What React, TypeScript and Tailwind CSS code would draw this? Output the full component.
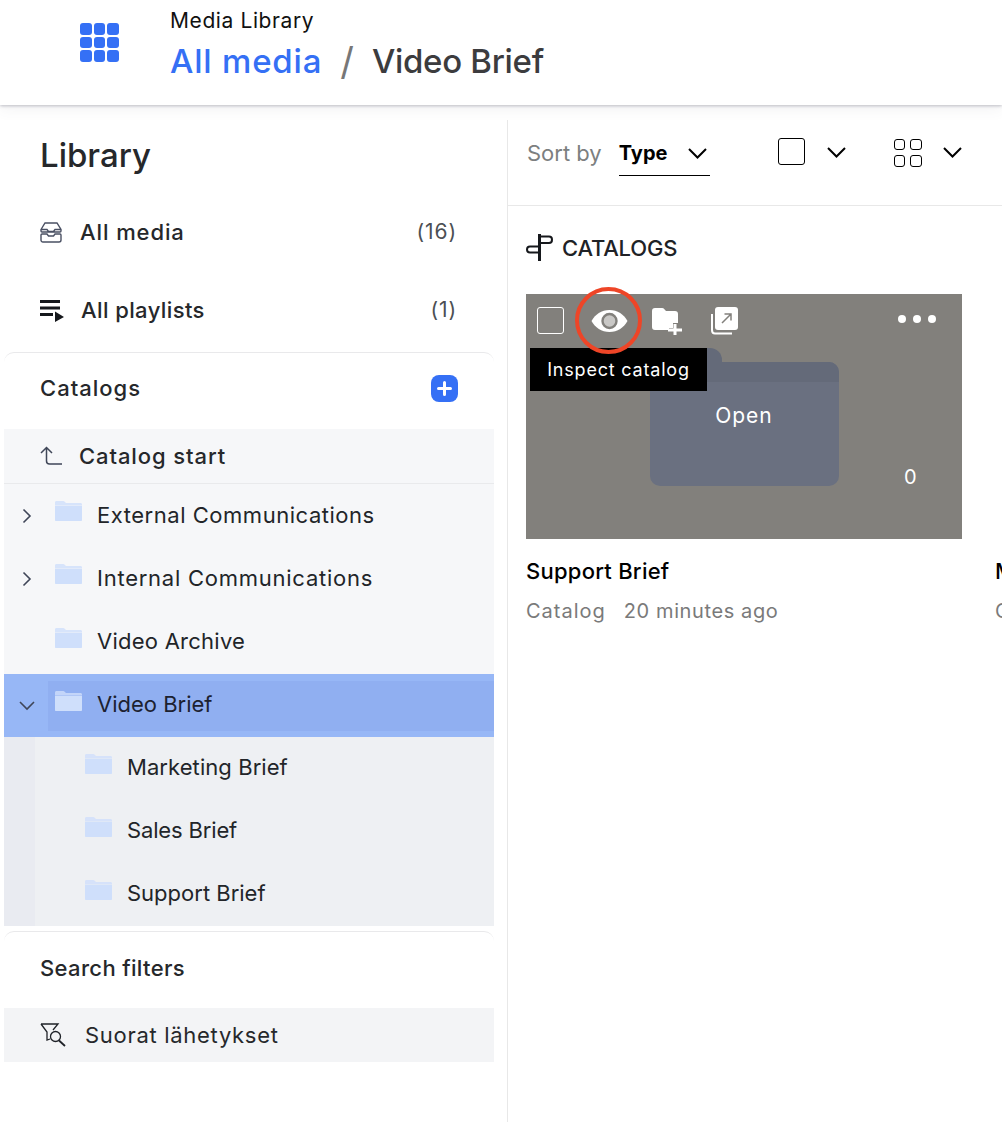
const font = "font-['Inter','Noto_Sans',sans-serif]";

function AppGrid() {
  return (
    <div className="grid w-[39px] grid-cols-3 gap-[2px]">
      {Array.from({ length: 9 }).map((_, i) => (
        <div key={i} className="h-[11.7px] rounded-[3px] bg-[#3570f5]" />
      ))}
    </div>
  );
}

function Chevron({ className = "" }: { className?: string }) {
  return (
    <svg width="19" height="11" viewBox="0 0 19 11" fill="none" stroke="#000" strokeWidth="2" className={className}>
      <path d="M1 1l8.500 8.500L18 1" />
    </svg>
  );
}

function FolderIcon({ className = "fill-[#cfdffb]" }: { className?: string }) {
  return (
    <svg width="28" height="20" viewBox="0 0 28 20" className={className}>
      <path d="M1 1.500C1 .7 1.600 0 2.400 0h6.800c.7 0 1.300.3 1.700.9L12 2h14.500c.8 0 1.500.6 1.500 1.400v.6H1z" opacity=".8" />
      <path d="M1 4.600h27V19c0 .6-.5 1-1 1H2c-.6 0-1-.4-1-1z" />
    </svg>
  );
}

type TreeRowProps = {
  label: string;
  tracking: string;
  open?: boolean;
  closed?: boolean;
  indent?: boolean;
  tall?: boolean;
  lift?: boolean;
};

function TreeRow({ label, tracking, open, closed, indent, tall, lift }: TreeRowProps) {
  return (
    <div className={`flex items-center ${tall ? "h-[64px]" : "h-[63px]"} ${open ? "bg-[#97b7f6]" : indent ? "bg-[#eef0f3]" : ""}`}>
      {indent ? (
        <div className="h-full w-[31px] shrink-0 bg-[#e9ebf1]" />
      ) : (
        <div className="flex w-[44px] shrink-0 justify-center pl-[2px]">
          {closed && (
            <svg width="10" height="16" viewBox="0 0 10 16" fill="none" stroke="#3f4658" strokeWidth="1.600">
              <path d="M1.500 1.500 8 8l-6.500 6.500" />
            </svg>
          )}
          {open && (
            <svg width="16" height="10" viewBox="0 0 16 10" fill="none" stroke="#3f4658" strokeWidth="1.600">
              <path d="M1 1l7 7 7-7" />
            </svg>
          )}
        </div>
      )}
      <div className={`flex h-[50px] flex-1 items-center ${open ? "bg-[#90aff1]" : ""} ${indent ? "pl-[49px]" : "pl-[6px]"}`}>
        <div className="-mt-[9px]">
          <FolderIcon />
        </div>
        <span className={`ml-[15px] text-[22px] ${tracking} ${lift ? "pb-[2px]" : ""} ${open ? "text-[#1c2130]" : "text-[#222529]"}`}>{label}</span>
      </div>
    </div>
  );
}

function Sidebar() {
  return (
    <aside className="flex h-full w-[508px] shrink-0 flex-col border-r border-[#e8e8e8] pl-[4px] pr-[13px]">
      <h1 className="mt-[14px] pl-[36px] text-[33px] leading-[42px] font-medium text-[#26282b]">Library</h1>
      <div className="mt-[36px] flex h-[40px] items-center pl-[36px] pr-[37px]">
        <svg width="22" height="22" viewBox="0 0 22 22" fill="none" stroke="#4a5063" strokeWidth="1.400">
          <path d="M1 8.500 5 2h12l4 6.500v1.600c0 .5-.4.9-1 .9H2c-.6 0-1-.4-1-.9zM1 8.500h6l1.500 2h5l1.500-2h6" />
          <path d="M2 13h5l1.500 2h5l1.500-2H20c.6 0 1 .4 1 1v5c0 1-.6 2-2 2H3c-1.400 0-2-1-2-2v-5c0-.6.4-1 1-1z" />
        </svg>
        <span className="ml-[18px] text-[22px] font-medium tracking-[0.9px] text-[#26282b]">All media</span>
        <span className="ml-auto text-[21px] tracking-[0.9px] text-[#4c4f54]">(16)</span>
      </div>
      <div className="mt-[38px] flex h-[40px] items-center pl-[36px] pr-[37px]">
        <svg width="26" height="24" viewBox="0 0 26 24" fill="#16181c">
          <path d="M0 2h20v3H0zM0 8.500h20v3H0zM0 15h13v3H0zM15 13.500l9 5.500-9 5z" />
        </svg>
        <span className="ml-[15px] text-[22px] font-medium tracking-[0.4px] text-[#26282b]">All playlists</span>
        <span className="ml-auto text-[21px] tracking-[0.9px] text-[#4c4f54]">(1)</span>
      </div>
      <section className="mt-[22px] rounded-t-[10px] border-t border-[#e9e9eb]">
        <div className="flex h-[76px] items-center justify-between pr-[36px] pb-[5px] pl-[36px]">
          <span className="text-[22px] font-medium tracking-[1px] text-[#26282b]">Catalogs</span>
          <div className="flex size-[27px] items-center justify-center rounded-[8px] bg-[#3570f5]">
            <svg width="15" height="15" viewBox="0 0 15 15" fill="#fff">
              <path d="M6 1.500a1.500 1.500 0 0 1 3 0V6h4.500a1.500 1.500 0 0 1 0 3H9v4.500a1.500 1.500 0 0 1-3 0V9H1.500a1.500 1.500 0 0 1 0-3H6z" />
            </svg>
          </div>
        </div>
        <div className="bg-[#f6f7f9]">
          <div className="flex h-[55px] items-center border-b border-[#e9eaec] pl-[36px]">
            <svg width="22" height="20" viewBox="0 0 22 20" fill="none" stroke="#3f4658" strokeWidth="1.500">
              <path d="M1 7 6.500 1.500 12 7M6.500 2v13c0 2 1 3 3 3H22" />
            </svg>
            <span className="ml-[17px] text-[22px] font-medium tracking-[0.9px] text-[#26282b]">Catalog start</span>
          </div>
          <TreeRow label="External Communications" tracking="tracking-[0.53px]" closed />
          <TreeRow label="Internal Communications" tracking="tracking-[0.75px]" closed />
          <TreeRow label="Video Archive" tracking="tracking-[0.25px]" tall lift />
          <TreeRow label="Video Brief" tracking="tracking-[0px]" open lift />
          <TreeRow label="Marketing Brief" tracking="tracking-[0.07px]" indent lift />
          <TreeRow label="Sales Brief" tracking="tracking-[-0.15px]" indent lift />
          <TreeRow label="Support Brief" tracking="tracking-[0px]" indent lift />
        </div>
      </section>
      <section className="mt-[5px] rounded-t-[10px] border-t border-[#e9e9eb]">
        <div className="flex h-[76px] items-center pb-[4px] pl-[36px]">
          <span className="text-[22px] font-medium tracking-[0.35px] text-[#26282b]">Search filters</span>
        </div>
        <div className="flex h-[54px] items-center bg-[#f3f4f6] pl-[36px]">
          <svg width="28" height="24" viewBox="0 0 28 24" fill="none" stroke="#1f2228" strokeWidth="1.300">
            <path d="M1 1h17l-5 6M1 1l6 8v8l3-1" />
            <circle cx="15.500" cy="13.500" r="5" />
            <path d="m19 17.500 6 5.500" strokeWidth="1.800" />
          </svg>
          <span className="ml-[17px] text-[22px] tracking-[0.7px] text-[#26282b]">Suorat lähetykset</span>
        </div>
      </section>
    </aside>
  );
}

function Toolbar() {
  return (
    <div className="flex h-[86px] items-center border-b border-[#e8e8e8] pb-[18px] pl-[19px]">
      <span className="text-[22px] text-[#7c7f80]">Sort by</span>
      <div className="ml-[17px] flex h-[45px] w-[91px] items-center justify-between border-b border-black pr-[3px]">
        <span className="text-[20px] font-bold text-black">Type</span>
        <Chevron />
      </div>
      <div className="ml-[68px] size-[27px] -translate-y-[2px] rounded-[3px] border-[1.500px] border-black" />
      <Chevron className="ml-[22px] -translate-y-[1px]" />
      <div className="ml-[48px] grid -translate-y-[1px] grid-cols-2 gap-[5px]">
        {[0, 1, 2, 3].map((i) => (
          <div key={i} className="size-[11.500px] rounded-[3px] border-[1.800px] border-black" />
        ))}
      </div>
      <Chevron className="ml-[21px] -translate-y-[1px]" />
    </div>
  );
}

function CardOverlay() {
  return (
    <>
      <div className="absolute top-[13px] left-[11px] size-[27px] rounded-[3px] border-[1.500px] border-white" />
      <svg width="37" height="24" viewBox="0 0 37 24" className="absolute top-[15px] left-[65px]">
        <path fill="#fff" d="M18.500 1C26.500 1 33 5.500 36.500 12 33 18.500 26.500 23 18.500 23S4 18.500.5 12C4 5.500 10.500 1 18.500 1z" />
        <circle cx="18.500" cy="12" r="7" fill="#c9c8c6" stroke="#82807c" strokeWidth="2.400" />
      </svg>
      <svg width="32" height="27" viewBox="0 0 32 27" className="absolute top-[14px] left-[125px]">
        <path fill="#fff" d="M1 3a3 3 0 0 1 3-3h7c1 0 1.800.4 2.400 1.200L15 3h9a3 3 0 0 1 3 3v9h-5v5h-4v2H4a3 3 0 0 1-3-3z" />
        <path fill="#fff" d="M22.500 16h3v4.500H31v3h-5.500V27h-3v-3.500H17v-3h5.500z" />
      </svg>
      <svg width="28" height="28" viewBox="0 0 28 28" className="absolute top-[13px] left-[184px]">
        <path fill="none" stroke="#fff" strokeWidth="2" d="M2 7v16c0 2 1 3.500 3 3.500h17" />
        <rect x="5" width="23" height="23" rx="3" fill="#fff" />
        <path fill="none" stroke="#82807c" strokeWidth="1.500" d="m12 16 9-9M14.500 7H21v6.500" />
      </svg>
      <div className="absolute top-[21px] left-[372px] flex gap-[7px]">
        {[0, 1, 2].map((i) => (
          <div key={i} className="size-[8px] rounded-full bg-white" />
        ))}
      </div>
      <div className="absolute top-[54px] left-[4px] flex h-[43px] w-[177px] items-center justify-center bg-black text-[18px] tracking-[0.8px] text-white">
        Inspect catalog
      </div>
      <div className="absolute top-[-7px] left-[49px] size-[67px] rounded-full border-[4px] border-[#ee4527]" />
    </>
  );
}

function Thumbnail() {
  return (
    <div className="relative flex h-[245px] items-start justify-center bg-[#82807c]">
      <div className="relative mt-[68px] h-[124px] w-[189px] rounded-[10px] bg-[#6a7080]">
        <div className="absolute -top-[14px] left-0 h-[20px] w-[72px] rounded-t-[12px] bg-[#646a79]" />
        <div className="relative h-[20px] rounded-t-[10px] bg-[#646a79]" />
        <div className="mt-[18px] text-center text-[21px] tracking-[1px] text-white">Open</div>
      </div>
      <span className="absolute top-[168px] left-[378px] text-[20px] text-white">0</span>
      <CardOverlay />
    </div>
  );
}

function CatalogCard({ title, thumbnail }: { title: string; thumbnail?: boolean }) {
  return (
    <div className="w-[436px] shrink-0">
      {thumbnail ? <Thumbnail /> : <div className="h-[245px]" />}
      <p className="mt-[18px] text-[22px] leading-[28px] font-medium tracking-[0.25px] text-black">{title}</p>
      <p className="mt-[12px] text-[20px] leading-[28px] text-[#7a7a7a]">
        <span className="tracking-[1px]">Catalog</span>
        <span className="ml-[18px] tracking-[0.6px]">20 minutes ago</span>
      </p>
    </div>
  );
}

function Main() {
  return (
    <main className="min-w-0 flex-1 overflow-hidden">
      <Toolbar />
      <div className="pt-[26px] pl-[18px]">
        <div className="flex items-center">
          <svg width="28" height="28" viewBox="0 0 28 28" fill="none" stroke="#16181c" strokeWidth="2" className="-translate-y-[1px]">
            <path d="M13.500 0v27" strokeWidth="3" />
            <path d="M13 2.500h10c2 0 3 1.200 3 3.200S25 9 23 9H13" />
            <path d="M13 12.500H4c-2 0-3 1.200-3 3s1 3 3 3h9" />
          </svg>
          <span className="ml-[8px] text-[22px] font-medium tracking-[-0.2px] text-[#202226]">CATALOGS</span>
        </div>
        <div className="mt-[29px] flex gap-[33px]">
          <CatalogCard title="Support Brief" thumbnail />
          <CatalogCard title="Marketing Brief" />
        </div>
      </div>
    </main>
  );
}

export default function App() {
  return (
    <div className={`h-[1122px] w-[1002px] overflow-hidden bg-white ${font}`}>
      <header className="relative z-10 flex h-[105px] bg-white shadow-[0_1px_3px_rgba(80,80,100,0.35),0_6px_12px_rgba(80,80,100,0.06)]">
        <div className="mt-[23px] ml-[80px]">
          <AppGrid />
        </div>
        <div className="ml-[51px] pt-[7px]">
          <div className="text-[21px] leading-[28px] tracking-[0.6px] text-[#111]">Media Library</div>
          <div className="mt-[1px] flex items-center text-[33px] leading-[50px] font-medium">
            <span className="tracking-[0.8px] text-[#3570f5]">All media</span>
            <span className="ml-[18px] text-[38px] font-normal text-[#777]">/</span>
            <span className="ml-[18px] tracking-[-0.3px] text-[#3c3c3e]">Video Brief</span>
          </div>
        </div>
      </header>
      <div className="flex h-[1017px]">
        <div className="flex h-full w-full pt-[15px]">
          <Sidebar />
          <Main />
        </div>
      </div>
    </div>
  );
}
